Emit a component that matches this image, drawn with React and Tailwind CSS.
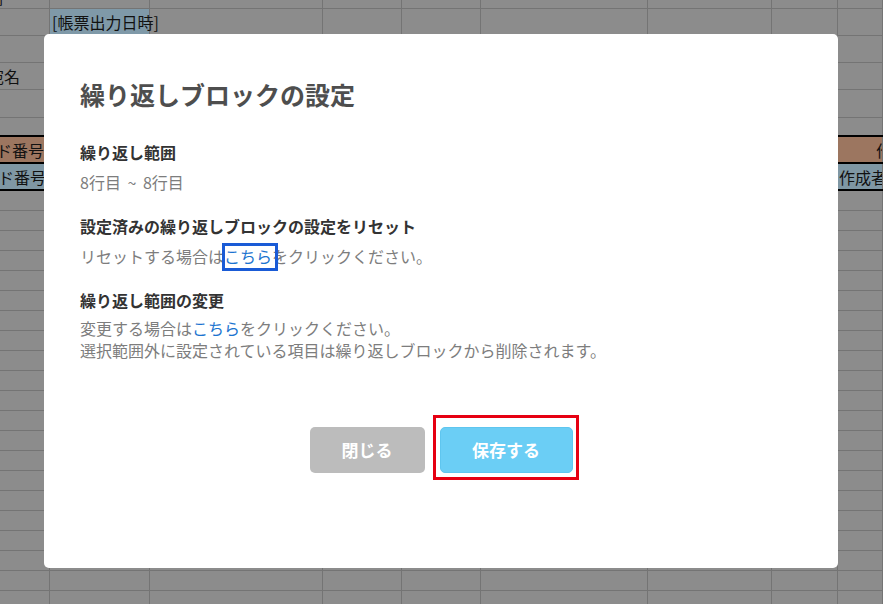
import React from 'react';

// column widths of the spreadsheet behind the dialog (each includes its right grid line)
const COLS = ['w-[50px]', 'w-[100px]', 'w-[173px]', 'w-[79px]', 'w-[79px]', 'w-[167px]', 'w-[124px]', 'w-[66px]', 'flex-1'];

const SheetRow = ({ className = '', cells = {} }) => (
  <div className={`flex shrink-0 ${className}`}>
    {COLS.map((w, i) => (
      <div key={i} className={`${w} relative overflow-hidden border-r border-[#747474] ${cells[i]?.bg || ''}`}>
        {cells[i]?.content}
      </div>
    ))}
  </div>
);

function Sheet() {
  const plainRows = Array.from({ length: 21 });
  return (
    <div className="flex flex-col bg-[#8c8c8c] text-[16px] text-[#111]">
      <SheetRow
        className="h-[9px] border-b border-[#747474]"
        cells={{ 0: { content: <span className="absolute -top-[14px] -left-[2px] leading-5">]</span> } }}
      />
      <SheetRow
        className="h-[27px] border-b border-[#747474]"
        cells={{
          1: {
            bg: 'bg-[#7f99a8] !overflow-visible z-10',
            content: <span className="absolute left-[2px] top-[1px] leading-6 whitespace-nowrap">[帳票出力日時]</span>,
          },
        }}
      />
      <SheetRow className="h-[27px] border-b border-[#747474]" />
      <SheetRow
        className="h-[27px] border-b border-[#747474]"
        cells={{ 0: { content: <span className="absolute -left-[12px] top-[1px] leading-6 whitespace-nowrap">宛名</span> } }}
      />
      <SheetRow className="h-[28px] border-b border-[#747474]" />
      <SheetRow className="h-[19px] border-b-2 border-b-black" />
      <SheetRow
        className="h-[27px] border-b-2 border-b-black bg-[#9c7660]"
        cells={{
          0: { content: <span className="absolute -left-[36px] top-[1px] leading-6 whitespace-nowrap">コード番号</span> },
          8: { content: <span className="absolute left-[38px] top-[1px] leading-6 whitespace-nowrap">作成者</span> },
        }}
      />
      <SheetRow
        className="h-[27px] border-b-2 border-b-black bg-[#7f97a4]"
        cells={{
          0: { content: <span className="absolute -left-[34px] top-[1px] leading-6 whitespace-nowrap">コード番号</span> },
          8: { content: <span className="absolute left-[1px] top-[1px] leading-6 whitespace-nowrap">作成者名</span> },
        }}
      />
      {plainRows.map((_, i) => (
        <SheetRow key={i} className="h-[20px] border-b border-[#747474]" />
      ))}
    </div>
  );
}

export default function App() {
  return (
    <div className="relative h-[604px] w-[883px] overflow-hidden font-['Noto_Sans_CJK_JP','Noto_Sans',sans-serif]">
      <Sheet />

      {/* Repeat block settings dialog */}
      <div className="absolute inset-0 z-20 flex items-start pt-[34px] pl-[44px]">
        <div className="h-[534px] w-[794px] rounded-[5px] bg-white px-9 pt-[42px]">
          <h2 className="text-[25px] leading-9 font-bold text-[#4e4e4e]">繰り返しブロックの設定</h2>

          <section className="mt-[29px]">
            <h3 className="mb-2 text-base leading-[22px] font-bold text-[#333]">繰り返し範囲</h3>
            <p className="text-base leading-[22px] text-[#7d7d7d] [word-spacing:3px]">8行目 ~ 8行目</p>
          </section>

          <section className="mt-[22px]">
            <h3 className="mb-2 text-base leading-[22px] font-bold text-[#333]">設定済みの繰り返しブロックの設定をリセット</h3>
            <p className="text-base leading-[22px] text-[#7d7d7d]">
              リセットする場合は
              <a className="relative text-[#1b74d0]">
                こちら
                <span className="absolute -top-[1px] -bottom-[3px] -left-[2px] -right-[6px] border-[3px] border-[#1a5bd6]" />
              </a>
              をクリックください。
            </p>
          </section>

          <section className="mt-[22px]">
            <h3 className="mb-[6px] text-base leading-[22px] font-bold text-[#333]">繰り返し範囲の変更</h3>
            <p className="text-base leading-[22px] text-[#7d7d7d]">
              変更する場合は<a className="text-[#1b74d0]">こちら</a>をクリックください。
            </p>
            <p className="text-base leading-[22px] text-[#7d7d7d]">選択範囲外に設定されている項目は繰り返しブロックから削除されます。</p>
          </section>

          <div className="mt-[66px] flex justify-center gap-[15px]">
            <button className="h-[46px] w-[115px] rounded-[5px] bg-[#bcbcbc] text-[17px] font-bold text-white">閉じる</button>
            <div className="relative">
              <button className="h-[46px] w-[133px] rounded-[5px] border border-[#5fc6ef] bg-[#6bcef5] text-[17px] font-bold text-white">
                保存する
              </button>
              <span className="pointer-events-none absolute -top-[12px] -bottom-[7px] -left-[7px] -right-[6px] border-[3px] border-[#e60012]" />
            </div>
          </div>
        </div>
      </div>
    </div>
  );
}
